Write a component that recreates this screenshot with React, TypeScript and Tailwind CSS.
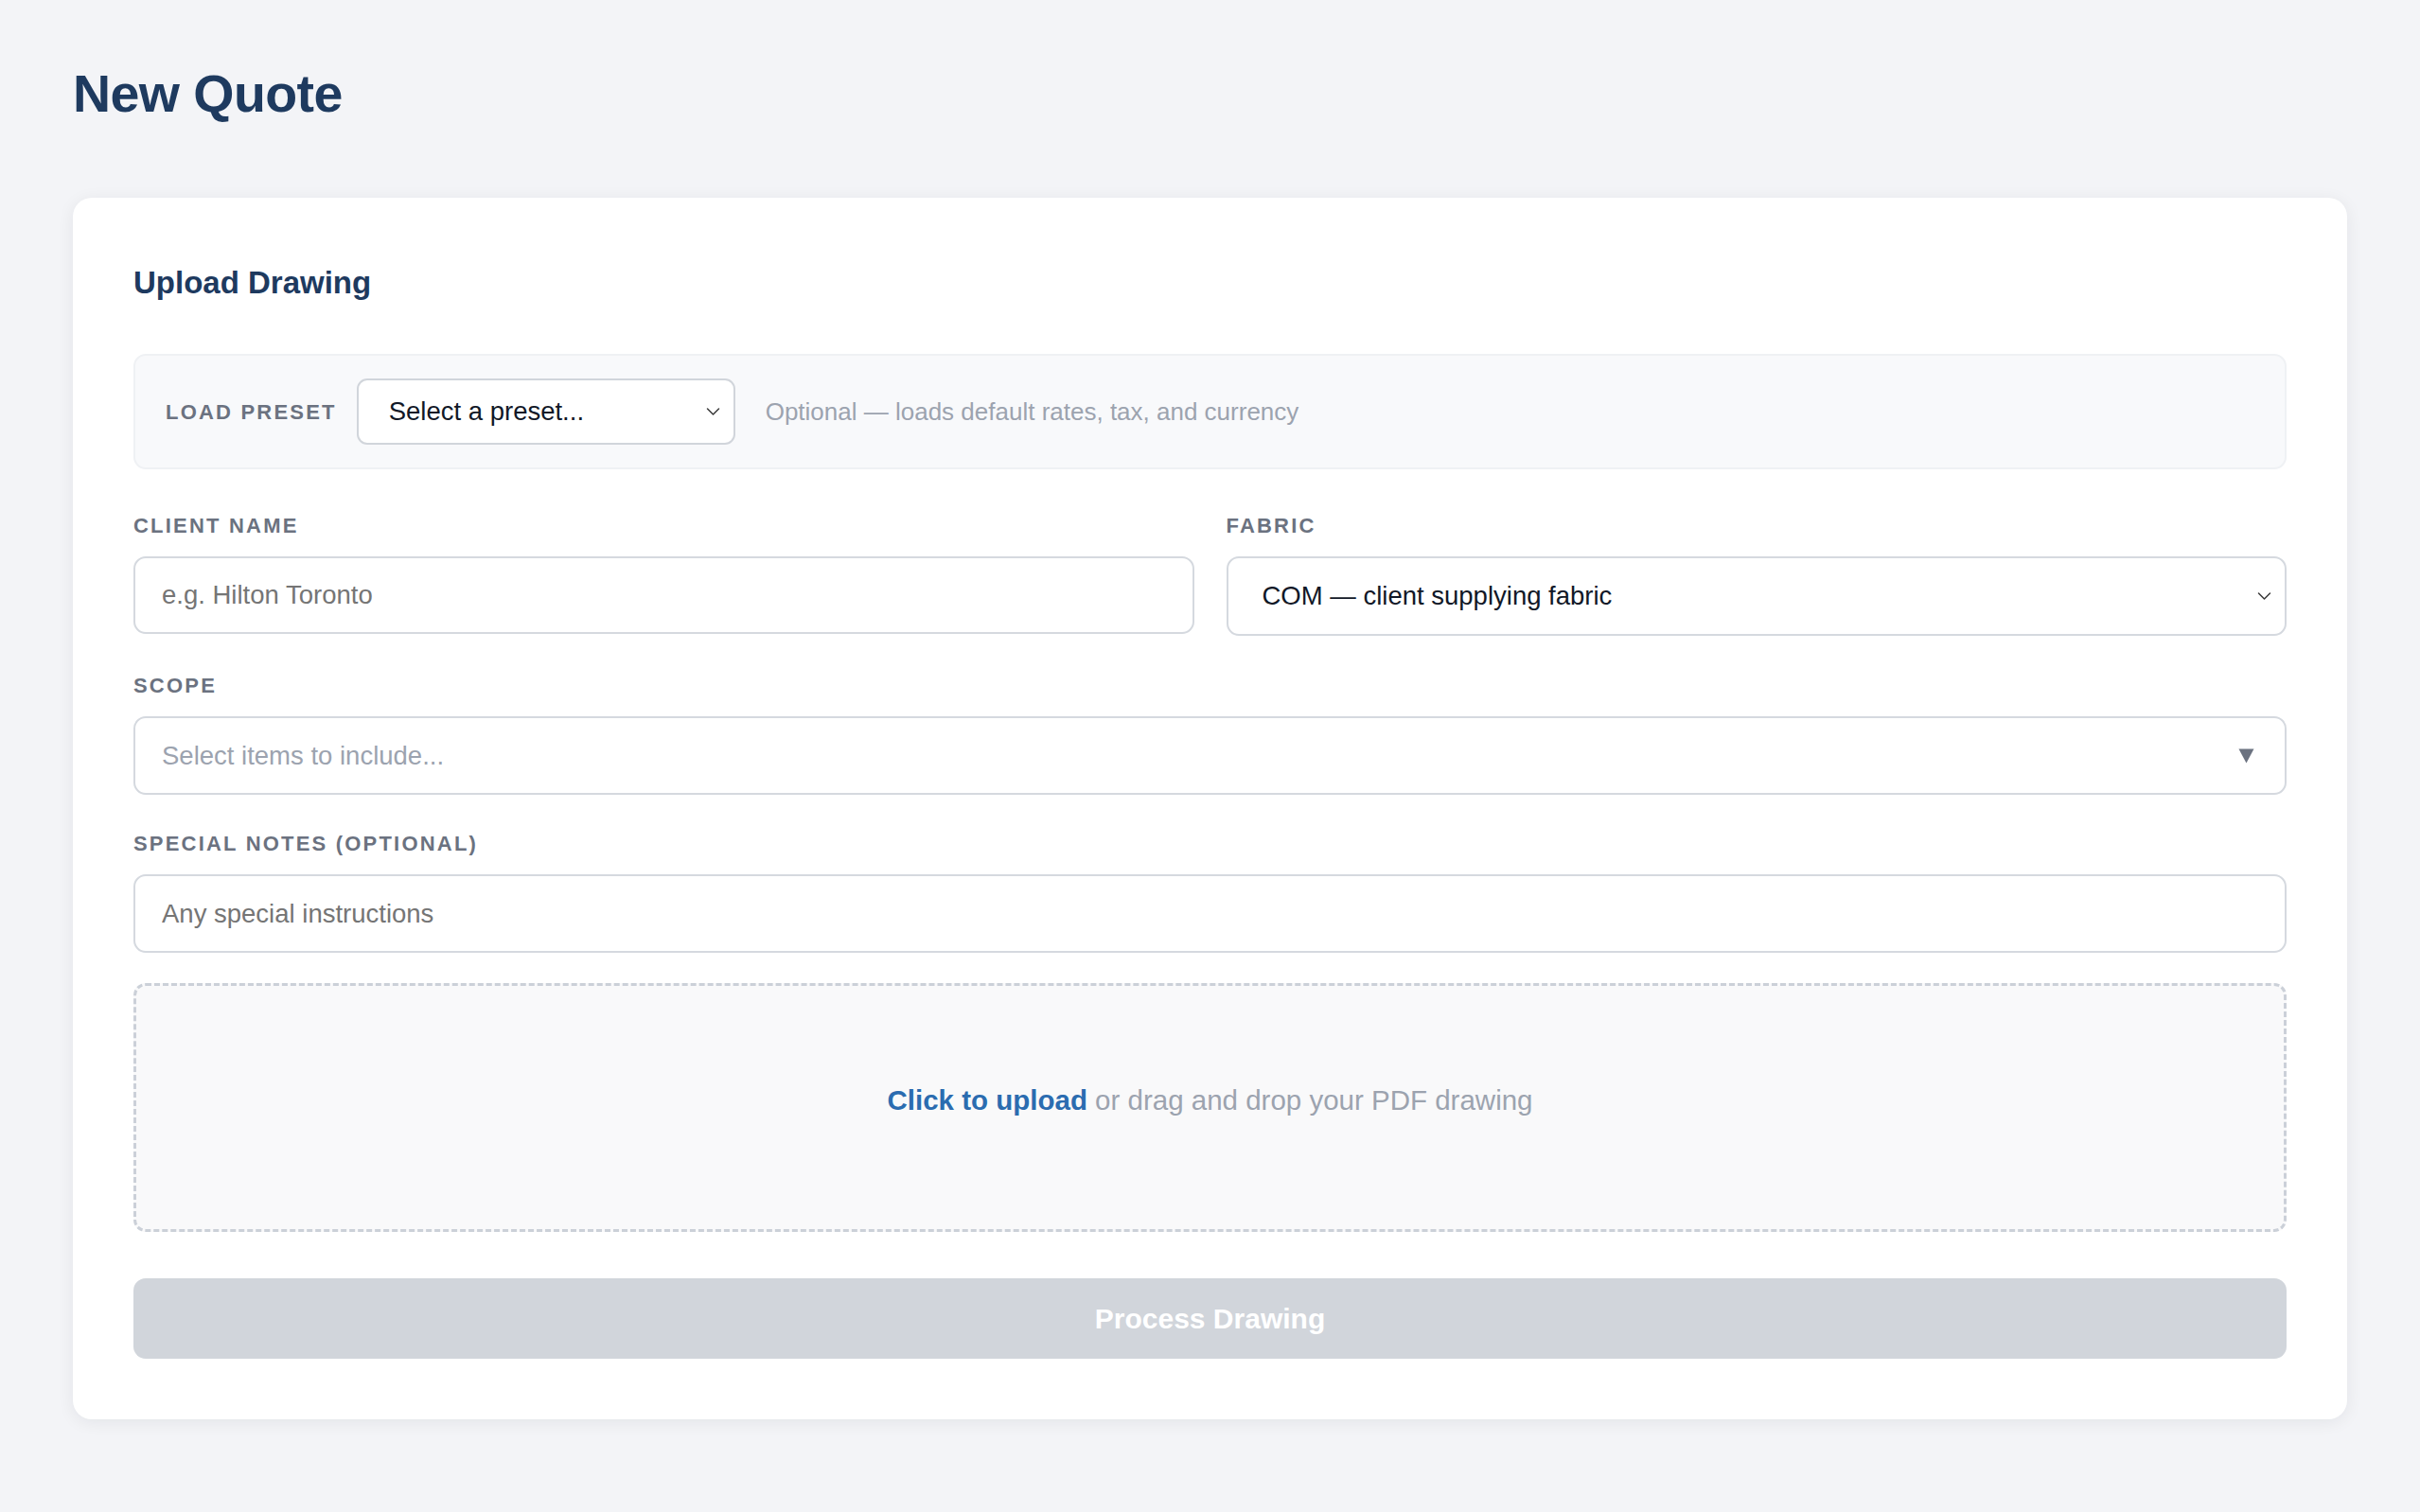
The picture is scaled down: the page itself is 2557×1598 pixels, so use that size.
import { useState } from 'react';

function Chevron() {
    return (
        <svg width="15" height="9" viewBox="0 0 15 9" fill="none" className="pointer-events-none absolute right-[16px] top-1/2 -translate-y-1/2">
            <path d="M1.5 1.5 L7.5 7.5 L13.5 1.5" stroke="#3a3a3a" strokeWidth="1.5" strokeLinecap="round" strokeLinejoin="round" />
        </svg>
    );
}

function Label({ children }: { children: React.ReactNode }) {
    return (
        <label className="block text-[22px] leading-[31px] font-bold uppercase tracking-[0.1em] text-[#6b7280] mb-[17px]">
            {children}
        </label>
    );
}

export default function App() {
    const [preset, setPreset] = useState('');
    const [fabric, setFabric] = useState('com');
    const [client, setClient] = useState('');
    const [notes, setNotes] = useState('');

    return (
        <div className="min-h-screen bg-[#f3f4f7] px-[77px] pt-[66px] pb-[96px] font-['Liberation_Sans',Arial,sans-serif]">
            <h1 className="text-[55.5px] leading-[66px] font-bold text-[#1e3a5f] tracking-[-0.01em] mb-[77px]">New Quote</h1>

            <div className="bg-white rounded-[20px] shadow-[0_3px_18px_rgba(15,23,42,0.07)] px-[64px] pt-[66px] pb-[64px]">
                <h2 className="text-[33px] leading-[48px] font-bold text-[#1e3a5f] mb-[51px]">Upload Drawing</h2>

                {/* preset bar */}
                <div className="flex items-center bg-[#f8f9fb] border-2 border-[#eff1f4] rounded-[13px] px-[32px] py-[24px] mb-[44px]">
                    <span className="text-[22px] font-bold uppercase tracking-[0.1em] text-[#6b7280] mr-[21px]">Load Preset</span>
                    <div className="relative w-[400px] h-[70px]">
                        <select
                            value={preset}
                            onChange={(e) => setPreset(e.target.value)}
                            className="appearance-none w-full h-full bg-white border-2 border-[#d1d5db] rounded-[11px] pl-[32px] pr-[40px] text-[27.5px] text-[#111827] outline-none"
                        >
                            <option value="">Select a preset...</option>
                        </select>
                        <Chevron />
                    </div>
                    <span className="ml-[32px] text-[26px] text-[#9ca3af]">Optional — loads default rates, tax, and currency</span>
                </div>

                <div className="grid grid-cols-2 gap-x-[34px] mb-[37px]">
                    <div>
                        <Label>Client Name</Label>
                        <input
                            value={client}
                            onChange={(e) => setClient(e.target.value)}
                            placeholder="e.g. Hilton Toronto"
                            className="w-full h-[82px] border-2 border-[#d5d9df] rounded-[13px] px-[28px] text-[27.5px] text-[#111827] placeholder:text-[#757575] outline-none"
                        />
                    </div>
                    <div>
                        <Label>Fabric</Label>
                        <div className="relative h-[84px]">
                            <select
                                value={fabric}
                                onChange={(e) => setFabric(e.target.value)}
                                className="appearance-none w-full h-full bg-white border-2 border-[#d5d9df] rounded-[13px] pl-[36px] pr-[44px] text-[27.5px] text-[#111827] outline-none"
                            >
                                <option value="com">COM — client supplying fabric</option>
                                <option value="supply">Supplied fabric</option>
                            </select>
                            <Chevron />
                        </div>
                    </div>
                </div>

                <div className="mb-[36px]">
                    <Label>Scope</Label>
                    <button className="w-full h-[83px] flex items-center justify-between border-2 border-[#d5d9df] rounded-[13px] pl-[28px] pr-[32px] text-[27.5px] text-[#9ca3af] bg-white">
                        <span>Select items to include...</span>
                        <svg width="17" height="16" viewBox="0 0 17 16">
                            <path d="M0.5 0.5 H16.5 L8.5 15.5 Z" fill="#6b7280" />
                        </svg>
                    </button>
                </div>

                <div className="mb-[32px]">
                    <Label>Special Notes (optional)</Label>
                    <input
                        value={notes}
                        onChange={(e) => setNotes(e.target.value)}
                        placeholder="Any special instructions"
                        className="w-full h-[83px] border-2 border-[#d5d9df] rounded-[13px] px-[28px] text-[27.5px] text-[#111827] placeholder:text-[#757575] outline-none"
                    />
                </div>

                <div className="h-[263px] flex items-center justify-center border-[3px] border-dashed border-[#cbd0d8] rounded-[13px] bg-[#f9f9fa] pb-[14px] mb-[49px] cursor-pointer">
                    <p className="text-[29.5px] text-[#9ca3af]">
                        <span className="font-bold text-[#2b6cb0]">Click to upload</span> or drag and drop your PDF drawing
                    </p>
                </div>

                <button disabled className="w-full h-[85px] rounded-[13px] bg-[#d1d5db] text-white text-[30px] font-bold">
                    Process Drawing
                </button>
            </div>
        </div>
    );
}
